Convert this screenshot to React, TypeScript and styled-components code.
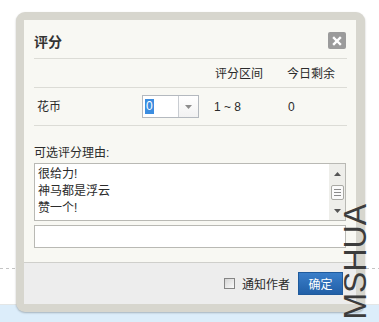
import React from "react";
import styled, { createGlobalStyle } from "styled-components";

const Global = createGlobalStyle`
  html, body { margin: 0; padding: 0; background: #fff; }
  body { font-family: "Liberation Sans", "Noto Sans CJK SC", sans-serif; font-size: 12px; color: #2b2b2b; }
`;

const Page = styled.div`
  position: relative;
  width: 379px;
  height: 322px;
  overflow: hidden;
  box-sizing: border-box;
  padding: 12px 0 0 16px;
  background:
    repeating-linear-gradient(90deg, #c4c4c4 0 3px, transparent 3px 6px) 0 268px / 100% 1px no-repeat,
    linear-gradient(180deg, #fff 0 304px, #e3e6e6 304px 305px, #dcedfa 305px 100%);
`;

const Frame = styled.div`
  width: 349px;
  box-sizing: border-box;
  padding: 8px 9px 8px 8px;
  background: #d7d6ce;
  border-radius: 9px;
  box-shadow: 0 1px 2px rgba(0, 0, 0, 0.25);
`;

const Dialog = styled.div`
  display: flex;
  flex-direction: column;
  height: 284px;
  background: #f8f8f3;
`;

const Body = styled.div`
  padding: 0 9px 0 10px;
  display: flex;
  flex-direction: column;
  flex: 1;
`;

const Header = styled.div`
  height: 39px;
  box-sizing: border-box;
  padding-top: 12px;
  border-bottom: 1px solid #dcdcd6;
  display: flex;
  justify-content: space-between;
  align-items: flex-start;
`;

const Title = styled.h3`
  margin: 0;
  font-size: 14px;
  font-weight: bold;
  line-height: 20px;
  color: #333;
`;

const Close = styled.button`
  width: 18px;
  height: 17px;
  margin-right: 1px;
  padding: 0;
  border: none;
  border-radius: 2px;
  background: #9b9b9b;
  display: flex;
  align-items: center;
  justify-content: center;
`;

const Grid = styled.div<{ $head?: boolean }>`
  display: grid;
  grid-template-columns: 108px 72px 73px 1fr;
  align-items: ${(p) => (p.$head ? "start" : "center")};
  height: ${(p) => (p.$head ? "29px" : "38px")};
  box-sizing: border-box;
  padding-top: ${(p) => (p.$head ? "7px" : "0")};
  border-bottom: 1px solid #dcdcd6;
  line-height: 16px;
`;

const Cell = styled.span<{ $indent?: number }>`
  padding-left: ${(p) => p.$indent ?? 0}px;
`;

const Select = styled.div`
  width: 57px;
  height: 23px;
  box-sizing: border-box;
  border: 1px solid #b4b9bf;
  background: #fff;
  display: flex;
`;

const SelectValue = styled.div`
  width: 33px;
  border-right: 1px solid #c9cdd2;
  display: flex;
  align-items: center;
  padding-left: 2px;
`;

const Highlight = styled.span`
  background: #3b8de0;
  color: #fff;
  line-height: 15px;
  padding: 0 1px;
`;

const SelectArrow = styled.div`
  flex: 1;
  display: flex;
  align-items: center;
  justify-content: center;
  background: linear-gradient(#fff, #f2f2f2);
`;

const Label = styled.div`
  margin-top: 19px;
  line-height: 16px;
`;

const ListBox = styled.div`
  margin-top: 2px;
  width: 312px;
  height: 58px;
  box-sizing: border-box;
  border: 1px solid #b9b9b4;
  background: #fff;
  display: flex;
`;

const Items = styled.div`
  flex: 1;
  padding: 2px 0 0 3px;
  line-height: 17px;
  overflow: hidden;
`;

const Scroll = styled.div`
  width: 16px;
  background: #eeeeea;
  display: flex;
  flex-direction: column;
  align-items: center;
`;

const ScrollBtn = styled.div<{ $top?: boolean }>`
  height: 14px;
  width: 16px;
  margin: ${(p) => (p.$top ? "3px 0 0" : "auto 0 2px")};
  display: flex;
  align-items: center;
  justify-content: center;
`;

const Thumb = styled.div`
  width: 13px;
  height: 15px;
  box-sizing: border-box;
  border: 1px solid #a9a9a4;
  border-radius: 2px;
  background: #fafafa;
  display: flex;
  flex-direction: column;
  align-items: center;
  justify-content: center;
  gap: 2px;
  margin-top: 4px;
`;

const Grip = styled.div`
  width: 7px;
  height: 1px;
  background: #8a8a8a;
`;

const Input = styled.div`
  margin-top: 4px;
  width: 312px;
  height: 23px;
  box-sizing: border-box;
  border: 1px solid #b9b9b4;
  background: #fff;
`;

const Footer = styled.div`
  height: 42px;
  box-sizing: border-box;
  border-top: 1px solid #cfcfcb;
  background: #ededed;
  display: flex;
  align-items: center;
  justify-content: flex-end;
  padding: 0 13px 0 0;
  margin-top: 14px;
`;

const Check = styled.span`
  width: 11px;
  height: 11px;
  box-sizing: border-box;
  border: 1px solid #858585;
  background: linear-gradient(135deg, #d4d4d4, #fbfbfb);
  margin-right: 7px;
`;

const CheckLabel = styled.label`
  display: flex;
  align-items: center;
  font-size: 12px;
  margin-right: 8px;
`;

const Button = styled.button`
  width: 45px;
  height: 23px;
  padding: 0;
  border: 1px solid #1f5a9c;
  background: linear-gradient(#3a7ec9, #215fa7);
  color: #fff;
  font-family: inherit;
  font-size: 12px;
`;

const Watermark = styled.div`
  position: absolute;
  left: 339px;
  top: 204px;
  writing-mode: vertical-rl;
  transform: rotate(180deg);
  font-family: "Liberation Sans", Arial, sans-serif;
  font-size: 32px;
  line-height: 32px;
  color: #3c3c3c;
`;

export default function App() {
  return (
    <>
      <Global />
      <Page>
        <Frame>
          <Dialog>
            <Body>
              <Header>
                <Title>评分</Title>
                <Close aria-label="close">
                  <svg width="10" height="10" viewBox="0 0 10 10">
                    <path d="M2 2 L8 8 M8 2 L2 8" stroke="#fff" strokeWidth="2.4" strokeLinecap="square" />
                  </svg>
                </Close>
              </Header>
              <Grid $head>
                <Cell />
                <Cell />
                <Cell $indent={1}>评分区间</Cell>
                <Cell>今日剩余</Cell>
              </Grid>
              <Grid>
                <Cell $indent={3}>花币</Cell>
                <Select>
                  <SelectValue>
                    <Highlight>0</Highlight>
                  </SelectValue>
                  <SelectArrow>
                    <svg width="7" height="4" viewBox="0 0 7 4">
                      <path d="M0 0 H7 L3.5 4 Z" fill="#8d8d8d" />
                    </svg>
                  </SelectArrow>
                </Select>
                <Cell>1 ~ 8</Cell>
                <Cell $indent={1}>0</Cell>
              </Grid>
              <Label>可选评分理由:</Label>
              <ListBox>
                <Items>
                  <div>很给力!</div>
                  <div>神马都是浮云</div>
                  <div>赞一个!</div>
                </Items>
                <Scroll>
                  <ScrollBtn $top>
                    <svg width="7" height="4" viewBox="0 0 7 4">
                      <path d="M0 4 H7 L3.5 0 Z" fill="#555" />
                    </svg>
                  </ScrollBtn>
                  <Thumb>
                    <Grip />
                    <Grip />
                    <Grip />
                  </Thumb>
                  <ScrollBtn>
                    <svg width="7" height="4" viewBox="0 0 7 4">
                      <path d="M0 0 H7 L3.5 4 Z" fill="#555" />
                    </svg>
                  </ScrollBtn>
                </Scroll>
              </ListBox>
              <Input />
            </Body>
            <Footer>
              <CheckLabel>
                <Check />
                通知作者
              </CheckLabel>
              <Button>确定</Button>
            </Footer>
          </Dialog>
        </Frame>
        <Watermark>MSHUA</Watermark>
      </Page>
    </>
  );
}
